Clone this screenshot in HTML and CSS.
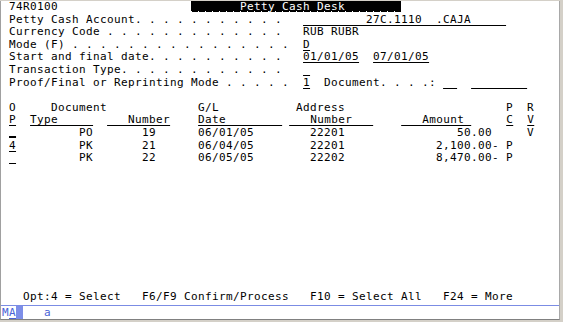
FILE: index.html
```html
<!DOCTYPE html>
<html>
<head>
<meta charset="utf-8">
<title>Petty Cash Desk</title>
<link rel="stylesheet" href="styles.css">
</head>
<body>
<div class="frame">
<div class="screen">
<div class="row"> 74R0100                   <span class="title">       Petty Cash Desk        </span></div>
<div class="row"> Petty Cash Account. . . . . . . . . . .   <span class="ul">         27C.1110  .CAJA     </span></div>
<div class="row"> Currency Code . . . . . . . . . . . . .   RUB RUBR</div>
<div class="row"> Mode (F) . . . . . . . . . . . . . . . .  <span class="ul">D</span></div>
<div class="row"> Start and final date. . . . . . . . . .   <span class="ul">01/01/05</span>  <span class="ul">07/01/05</span></div>
<div class="row"> Transaction Type. . . . . . . . . . . .   <span class="ul"> </span></div>
<div class="row"> Proof/Final or Reprinting Mode . . . . .  <span class="ul">1</span>  Document. . . .: <span class="ul">  </span>  <span class="ul">        </span></div>
<div class="row"></div>
<div class="row"> O     Document             G/L           Address                       P  R</div>
<div class="row"> <span class="ul">P</span>  <span class="ul">Type     </span>  <span class="ul">   Number</span>    <span class="ul">Date        </span> <span class="ul">   Number   </span>    <span class="ul">   Amount </span>     <span class="ul">C</span>  <span class="ul">V</span></div>
<div class="row"> <span class="cur"> </span>         PO       19      06/01/05        22201                50.00     V</div>
<div class="row"> <span class="ul">4</span>         PK       21      06/04/05        22201             2,100.00- P</div>
<div class="row"> <span class="ul"> </span>         PK       22      06/05/05        22202             8,470.00- P</div>
<div class="row"></div>
<div class="row"></div>
<div class="row"></div>
<div class="row"></div>
<div class="row"></div>
<div class="row"></div>
<div class="row"></div>
<div class="row"></div>
<div class="row"></div>
<div class="row"></div>
<div class="row">   Opt:4 = Select   F6/F9 Confirm/Process   F10 = Select All   F24 = More</div>
</div>
<div class="oia">M<span class="ul">A</span><span class="blk"> </span>   a</div>
</div>
</body>
</html>
```

FILE: styles.css
```css
* {
  box-sizing: border-box;
}

html,
body {
  margin: 0;
  height: 322px;
  overflow: hidden;
}

body {
  background: #d4d0c8;
  font-family: "DejaVu Sans Mono", "Liberation Mono", monospace;
  font-size: 11px;
  letter-spacing: 0.378px;
  color: #000;
}

.frame {
  margin-top: 1px;
  width: 560px;
  height: 319px;
  background: #fff;
  border-left: 1px solid #a0a0a0;
  border-right: 1px solid #a8a8a8;
  border-bottom: 1px solid #808080;
}

.screen {
  padding-left: 1px;
}

.row {
  height: 12.6px;
  line-height: 12.6px;
  white-space: pre;
}

.ul {
  text-decoration: underline;
  text-decoration-thickness: 1px;
  text-underline-offset: 2px;
}

.cur {
  text-decoration: underline;
  text-decoration-thickness: 2px;
  text-underline-offset: 0px;
}

.title {
  display: inline-block;
  height: 11px;
  line-height: 11px;
  color: #fff;
  background-color: #000;
  background-image: repeating-linear-gradient(to right, #fff 0 1px, #000 1px 7px);
  background-size: 100% 1px;
  background-position: left bottom;
  background-repeat: no-repeat;
}

.oia {
  margin-top: 1.6px;
  padding-left: 1px;
  border-top: 1px solid #7b8ce4;
  height: 13px;
  line-height: 13px;
  white-space: pre;
  color: #4a63d6;
}

.blk {
  background: #7d8ee8;
}
```
